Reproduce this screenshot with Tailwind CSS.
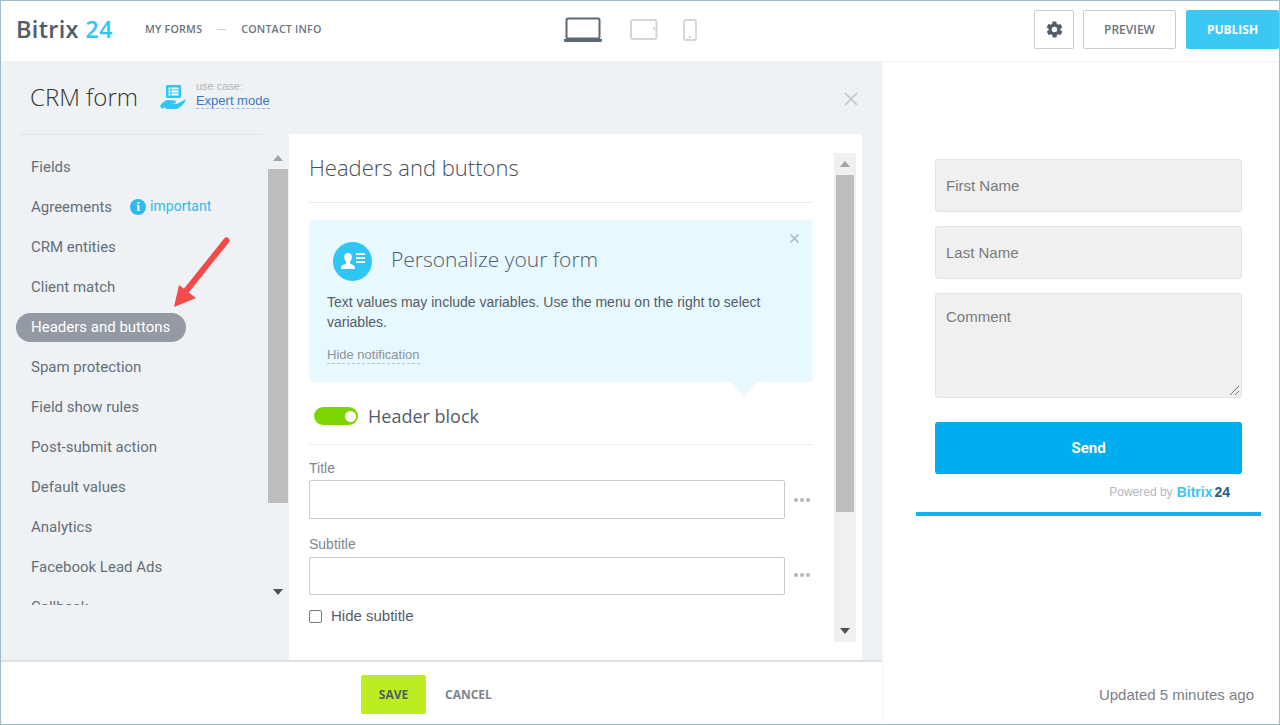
<!DOCTYPE html>
<html lang="en">
<head>
<meta charset="utf-8">
<title>CRM form</title>
<script src="https://cdn.jsdelivr.net/npm/@tailwindcss/browser@4"></script>
</head>
<body class="m-0 overflow-hidden bg-white font-['Roboto',sans-serif]">
<div class="relative flex h-[725px] w-[1280px] flex-col border border-[#9fbccb] overflow-hidden">
  <!-- Top bar -->
  <header class="flex h-[60px] shrink-0 items-center bg-white relative pb-[3px]">
    <div class="ml-[15px] w-[129px] font-['Open_Sans',sans-serif] text-[23.500px] leading-none font-semibold text-[#525c69] tracking-[0.3px]">Bitrix <span class="text-[#2fc6f6]">24</span></div>
    <nav class="flex items-center font-['Open_Sans',sans-serif] text-[10.700px] font-semibold text-[#6b7480] tracking-[0.2px]">
      <span>MY FORMS</span>
      <span class="mx-[15px] h-px w-[9px] bg-[#c9cfd4]"></span>
      <span>CONTACT INFO</span>
    </nav>
    <div class="ml-[241px] flex items-center">
      <svg width="40" height="26" viewBox="0 0 40 26" class="text-[#5c6875]"><rect x="3.5" y="1.5" width="33" height="20" rx="1.5" fill="none" stroke="currentColor" stroke-width="2"/><path d="M1 22h38v1.5a1.5 1.5 0 0 1-1.5 1.5h-35A1.5 1.5 0 0 1 1 23.5z" fill="currentColor"/></svg>
      <svg width="28" height="22" viewBox="0 0 28 22" class="ml-[27px] text-[#d3d6d9]"><rect x="1" y="1" width="25.500" height="19" rx="2" fill="none" stroke="currentColor" stroke-width="2"/><rect x="23" y="8" width="2" height="3" fill="currentColor"/></svg>
      <svg width="14" height="22" viewBox="0 0 14 22" class="ml-[25px] text-[#d3d6d9]"><rect x="1" y="1" width="12" height="20" rx="2" fill="none" stroke="currentColor" stroke-width="1.800"/><rect x="6" y="17" width="2" height="2" fill="currentColor"/></svg>
    </div>
    <div class="ml-auto flex items-center">
      <button class="flex h-[39px] w-[40px] items-center justify-center rounded-[2px] border border-[#c6cdd3] bg-white">
        <svg width="19" height="19" viewBox="0 0 24 24" class="text-[#535c69]"><path fill="currentColor" d="M19.400 13a7.600 7.600 0 0 0 0-2l2.100-1.600a.5.5 0 0 0 .1-.6l-2-3.500a.5.5 0 0 0-.6-.2l-2.500 1a7.300 7.300 0 0 0-1.700-1l-.4-2.700a.5.5 0 0 0-.5-.4h-4a.5.5 0 0 0-.5.4l-.4 2.700a7.300 7.300 0 0 0-1.700 1l-2.500-1a.5.5 0 0 0-.6.2l-2 3.500a.5.5 0 0 0 .1.600L4.600 11a7.600 7.600 0 0 0 0 2l-2.100 1.600a.5.5 0 0 0-.1.600l2 3.500c.1.200.4.300.6.200l2.500-1c.5.400 1.100.700 1.700 1l.4 2.700c0 .2.200.4.500.4h4c.3 0 .5-.2.500-.4l.4-2.700c.6-.3 1.200-.6 1.700-1l2.500 1c.2.100.5 0 .6-.2l2-3.500a.5.5 0 0 0-.1-.6zM12 15.500a3.500 3.500 0 1 1 0-7 3.500 3.500 0 0 1 0 7z"/></svg>
      </button>
      <button class="ml-[9px] h-[39px] w-[93px] rounded-[2px] border border-[#c6cdd3] bg-white font-['Open_Sans',sans-serif] text-[12px] font-semibold text-[#6b7480]">PREVIEW</button>
      <button class="ml-[10px] h-[39px] w-[93px] rounded-[2px] bg-[#3bc8f5] font-['Open_Sans',sans-serif] text-[12px] font-bold text-white">PUBLISH</button>
    </div>
  </header>

  <div class="flex min-h-0 flex-1 border-t border-[#f2f4f5]">
    <!-- Left editor panel -->
    <div class="flex w-[881px] shrink-0 flex-col">
      <div class="flex min-h-0 flex-1 flex-col bg-[#eef2f4]">
        <div class="flex h-[72px] shrink-0 items-center pl-[29px] pr-[24px]">
          <h1 class="font-['Open_Sans',sans-serif] text-[24px] font-light leading-none text-[#333] mt-[-2px]">CRM form</h1>
          <svg width="27" height="25" viewBox="0 0 27 25" class="ml-[22px] mt-[-1px]"><rect x="6" y="0" width="15" height="13" rx="1" fill="#2fc6f6"/><g fill="#fff"><rect x="8.500" y="2.500" width="2" height="2"/><rect x="11.500" y="2.500" width="7" height="2"/><rect x="8.500" y="5.500" width="2" height="2"/><rect x="11.500" y="5.500" width="7" height="2"/><rect x="8.500" y="8.500" width="2" height="2"/><rect x="11.500" y="8.500" width="7" height="2"/></g><path d="M0 21C2 18 5 15 8 15L15 15.500C16.500 16 16 18 14.500 18L11 18L17 19L26 14C25 18 21 22 17 24L7 24L4 22.500L2 24Z" fill="#2fc6f6"/></svg>
          <div class="ml-[9px] mb-[8px] flex flex-col font-['Liberation_Sans',sans-serif]">
            <span class="text-[11px] leading-[12px] text-[#b1b5ba]">use case:</span>
            <span class="text-[13px] leading-[15px] text-[#3b78c0] border-b border-dashed border-[#9bbbe0] mt-[1px]">Expert mode</span>
          </div>
          <svg width="14" height="14" viewBox="0 0 14 14" class="ml-auto mt-[2px] text-[#c9cdd1]"><path d="M1 1l12 12M13 1L1 13" stroke="currentColor" stroke-width="1.800"/></svg>
        </div>
        <div class="flex min-h-0 flex-1">
          <!-- Side menu -->
          <div class="flex min-h-0 w-[267px] shrink-0 flex-col pl-[19px]">
            <div class="h-px w-[243px] shrink-0 bg-[#e0e5e8]"></div>
            <div class="ml-[-4px] flex h-[470px] flex-col overflow-hidden pt-[12px] text-[15px] text-[#646f7a]">
              <div class="flex h-[40px] shrink-0 items-center pl-[15px]">Fields</div>
              <div class="flex h-[40px] shrink-0 items-center pl-[15px]">Agreements
                <span class="ml-[18px] flex h-[16px] w-[16px] items-center justify-center rounded-full bg-[#2fb9f0] text-[12px] font-bold text-white font-['Liberation_Serif',serif]">i</span>
                <span class="ml-[4px] text-[14px] text-[#2fb9f0] mt-[-2px]">important</span>
              </div>
              <div class="flex h-[40px] shrink-0 items-center pl-[15px]">CRM entities</div>
              <div class="flex h-[40px] shrink-0 items-center pl-[15px]">Client match</div>
              <div class="flex h-[40px] shrink-0 items-center"><span class="flex h-[29px] w-[170px] items-center rounded-full bg-[#939aa3] pl-[15px] text-white">Headers and buttons</span></div>
              <div class="flex h-[40px] shrink-0 items-center pl-[15px]">Spam protection</div>
              <div class="flex h-[40px] shrink-0 items-center pl-[15px]">Field show rules</div>
              <div class="flex h-[40px] shrink-0 items-center pl-[15px]">Post-submit action</div>
              <div class="flex h-[40px] shrink-0 items-center pl-[15px]">Default values</div>
              <div class="flex h-[40px] shrink-0 items-center pl-[15px]">Analytics</div>
              <div class="flex h-[40px] shrink-0 items-center pl-[15px]">Facebook Lead Ads</div>
              <div class="flex h-[40px] shrink-0 items-center pl-[15px]">Callback</div>
            </div>
          </div>
          <!-- Side menu scrollbar -->
          <div class="flex h-[473px] w-[20px] shrink-0 flex-col items-center">
            <div class="flex h-[35px] w-full shrink-0 items-center justify-center pt-[12px]"><span class="h-0 w-0 border-x-[5px] border-b-[6px] border-x-transparent border-b-[#a3a3a3]"></span></div>
            <div class="h-[334px] w-full shrink-0 bg-[#bdbdbd]"></div>
            <div class="flex flex-1 items-end justify-center pb-[12px]"><span class="h-0 w-0 border-x-[5px] border-t-[6px] border-x-transparent border-t-[#505050]"></span></div>
          </div>
          <!-- Card -->
          <div class="ml-[1px] flex min-h-0 w-[573px] shrink-0 bg-white pl-[20px] pt-[19px]">
            <div class="w-[504px] shrink-0">
              <h2 class="flex h-[50px] items-center border-b border-[#e8ebed] pb-[22px] font-['Open_Sans',sans-serif] text-[22px] font-light leading-none text-[#4a4f55]">Headers and buttons</h2>
              <div class="relative mt-[17px] h-[162px] rounded-[4px] bg-[#e8f8ff] pl-[18px] pt-[22px]">
                <div class="flex items-center pl-[6px]">
                  <span class="flex h-[39px] w-[39px] items-center justify-center rounded-full bg-[#2fc6f6]">
                    <svg width="24" height="20" viewBox="0 0 24 20" fill="#fff"><path d="M7 1c2.500 0 3.800 2 3.800 4.300 0 1.900-.8 3.200-1.800 4.200v2c1.300 1 5 1.500 5 4.500v1H0v-1c0-3 3.700-3.500 5-4.500v-2C4 8.500 3.200 7.200 3.200 5.300 3.200 3 4.500 1 7 1z"/><rect x="15" y="1" width="9" height="2"/><rect x="15" y="5" width="9" height="2"/><rect x="15" y="9" width="9" height="2"/></svg>
                  </span>
                  <span class="ml-[19px] mb-[4px] font-['Open_Sans',sans-serif] text-[21px] font-light text-[#535c69]">Personalize your form</span>
                </div>
                <p class="mt-[11px] w-[460px] font-['Liberation_Sans',sans-serif] text-[14px] leading-[20px] text-[#535c69]">Text values may include variables. Use the menu on the right to select variables.</p>
                <span class="mt-[15px] inline-block border-b border-dashed border-[#b8c2c9] font-['Liberation_Sans',sans-serif] text-[13px] leading-[16px] text-[#8c949c]">Hide notification</span>
                <svg width="9" height="9" viewBox="0 0 9 9" class="absolute right-[14px] top-[14px] text-[#a9b6bf]"><path d="M.5.500l8 8M8.500.500l-8 8" stroke="currentColor" stroke-width="1.500"/></svg>
                <span class="absolute left-[421px] top-[162px] h-0 w-0 border-x-[14px] border-t-[14px] border-x-transparent border-t-[#e8f8ff]"></span>
              </div>
              <div class="mt-[25px] flex h-[38px] items-start border-b border-[#eceef0] pl-[5px]">
                <span class="flex h-[18px] w-[44px] items-center justify-end rounded-full bg-[#7bd500] pr-[2px]"><span class="h-[11px] w-[11px] rounded-full bg-white"></span></span>
                <span class="ml-[10px] mt-[-3px] font-['Open_Sans',sans-serif] text-[18px] leading-[24px] text-[#535c69]">Header block</span>
              </div>
              <div class="mt-[15px] font-['Liberation_Sans',sans-serif] text-[14px] leading-[16px] text-[#80868e]">Title</div>
              <div class="mt-[4px] flex items-center">
                <div class="h-[39px] w-[476px] rounded-[2px] border border-[#c6cdd3] bg-white"></div>
                <span class="ml-[9px] flex gap-[2px]"><i class="h-[4px] w-[4px] rounded-full bg-[#b1b6bd]"></i><i class="h-[4px] w-[4px] rounded-full bg-[#b1b6bd]"></i><i class="h-[4px] w-[4px] rounded-full bg-[#b1b6bd]"></i></span>
              </div>
              <div class="mt-[17px] font-['Liberation_Sans',sans-serif] text-[14px] leading-[16px] text-[#80868e]">Subtitle</div>
              <div class="mt-[5px] flex items-center">
                <div class="h-[38px] w-[476px] rounded-[2px] border border-[#c6cdd3] bg-white"></div>
                <span class="ml-[9px] mb-[2px] flex gap-[2px]"><i class="h-[4px] w-[4px] rounded-full bg-[#b1b6bd]"></i><i class="h-[4px] w-[4px] rounded-full bg-[#b1b6bd]"></i><i class="h-[4px] w-[4px] rounded-full bg-[#b1b6bd]"></i></span>
              </div>
              <div class="mt-[12px] flex items-center font-['Liberation_Sans',sans-serif] text-[15px] leading-[18px] text-[#535c69]">
                <span class="h-[13px] w-[13px] rounded-[2px] border border-[#767676] bg-white"></span>
                <span class="ml-[9px]">Hide subtitle</span>
              </div>
            </div>
            <!-- Card scrollbar -->
            <div class="ml-[21px] flex h-[489px] w-[22px] shrink-0 flex-col items-center bg-[#f0f0f0]">
              <div class="flex h-[22px] w-full shrink-0 items-center justify-center"><span class="h-0 w-0 border-x-[5px] border-b-[6px] border-x-transparent border-b-[#a3a3a3]"></span></div>
              <div class="h-[337px] w-[18px] shrink-0 bg-[#bdbdbd]"></div>
              <div class="flex flex-1 items-end justify-center pb-[8px]"><span class="h-0 w-0 border-x-[5px] border-t-[6px] border-x-transparent border-t-[#505050]"></span></div>
            </div>
          </div>
        </div>
      </div>
      <!-- Footer -->
      <div class="flex h-[64px] shrink-0 items-center border-t-2 border-[#dfe2e4] bg-white pl-[360px] pt-[3px]">
        <button class="h-[39px] w-[65px] rounded-[2px] bg-[#bbed21] font-['Open_Sans',sans-serif] text-[12px] font-bold text-[#535c69]">SAVE</button>
        <span class="ml-[19px] font-['Open_Sans',sans-serif] text-[12px] font-bold text-[#7d858d]">CANCEL</span>
      </div>
    </div>

    <!-- Preview -->
    <div class="flex min-w-0 flex-1 flex-col border-l border-[#f3f5f6] bg-white">
      <div class="ml-[33px] mt-[97px] w-[345px]">
        <div class="px-[19px] font-['Liberation_Sans',sans-serif] text-[15px] text-[#7a7a7a]">
          <div class="flex h-[53px] items-center rounded-[3px] border border-[#e3e3e3] bg-[#f0f0f0] pl-[10px] pt-[2px]">First Name</div>
          <div class="mt-[14px] flex h-[53px] items-center rounded-[3px] border border-[#e3e3e3] bg-[#f0f0f0] pl-[10px] pt-[2px]">Last Name</div>
          <div class="relative mt-[14px] h-[105px] rounded-[3px] border border-[#e3e3e3] bg-[#f0f0f0] pl-[10px] pt-[14px] leading-[18px]">Comment
            <svg width="11" height="11" viewBox="0 0 11 11" class="absolute bottom-[1px] right-[1px] text-[#777]"><path d="M1 10l9-9M6 10l4-4" stroke="currentColor"/></svg>
          </div>
          <button class="mt-[24px] h-[52px] w-full rounded-[3px] bg-[#00aeef] font-['Roboto',sans-serif] text-[15px] font-bold text-white">Send</button>
        </div>
        <div class="mr-[31px] mt-[9px] flex h-[18px] items-center justify-end font-['Liberation_Sans',sans-serif]">
          <span class="text-[12px] text-[#b3b8c0]">Powered by</span>
          <span class="ml-[4px] text-[14px] font-bold text-[#3bc3f2]">Bitrix</span>
          <span class="ml-[2px] text-[14px] font-bold text-[#2b5a85]">24</span>
        </div>
        <div class="mt-[11px] h-[4px] bg-[#0fb2ef]"></div>
      </div>
      <div class="mt-auto flex h-[41px] items-start justify-end pr-[25px] pt-[1px] font-['Liberation_Sans',sans-serif] text-[15px] text-[#7b8087]">Updated 5 minutes ago</div>
    </div>
  </div>

  <!-- Annotation arrow over the menu -->
  <svg width="70" height="84" viewBox="0 0 70 84" class="pointer-events-none absolute left-[169px] top-[234px]">
    <path d="M56.500 5.500L16 56" stroke="#f34a4a" stroke-width="6" stroke-linecap="round" fill="none"/>
    <path d="M4 72L9 50L26 63Z" fill="#f34a4a"/>
  </svg>
</div>
</body>
</html>
